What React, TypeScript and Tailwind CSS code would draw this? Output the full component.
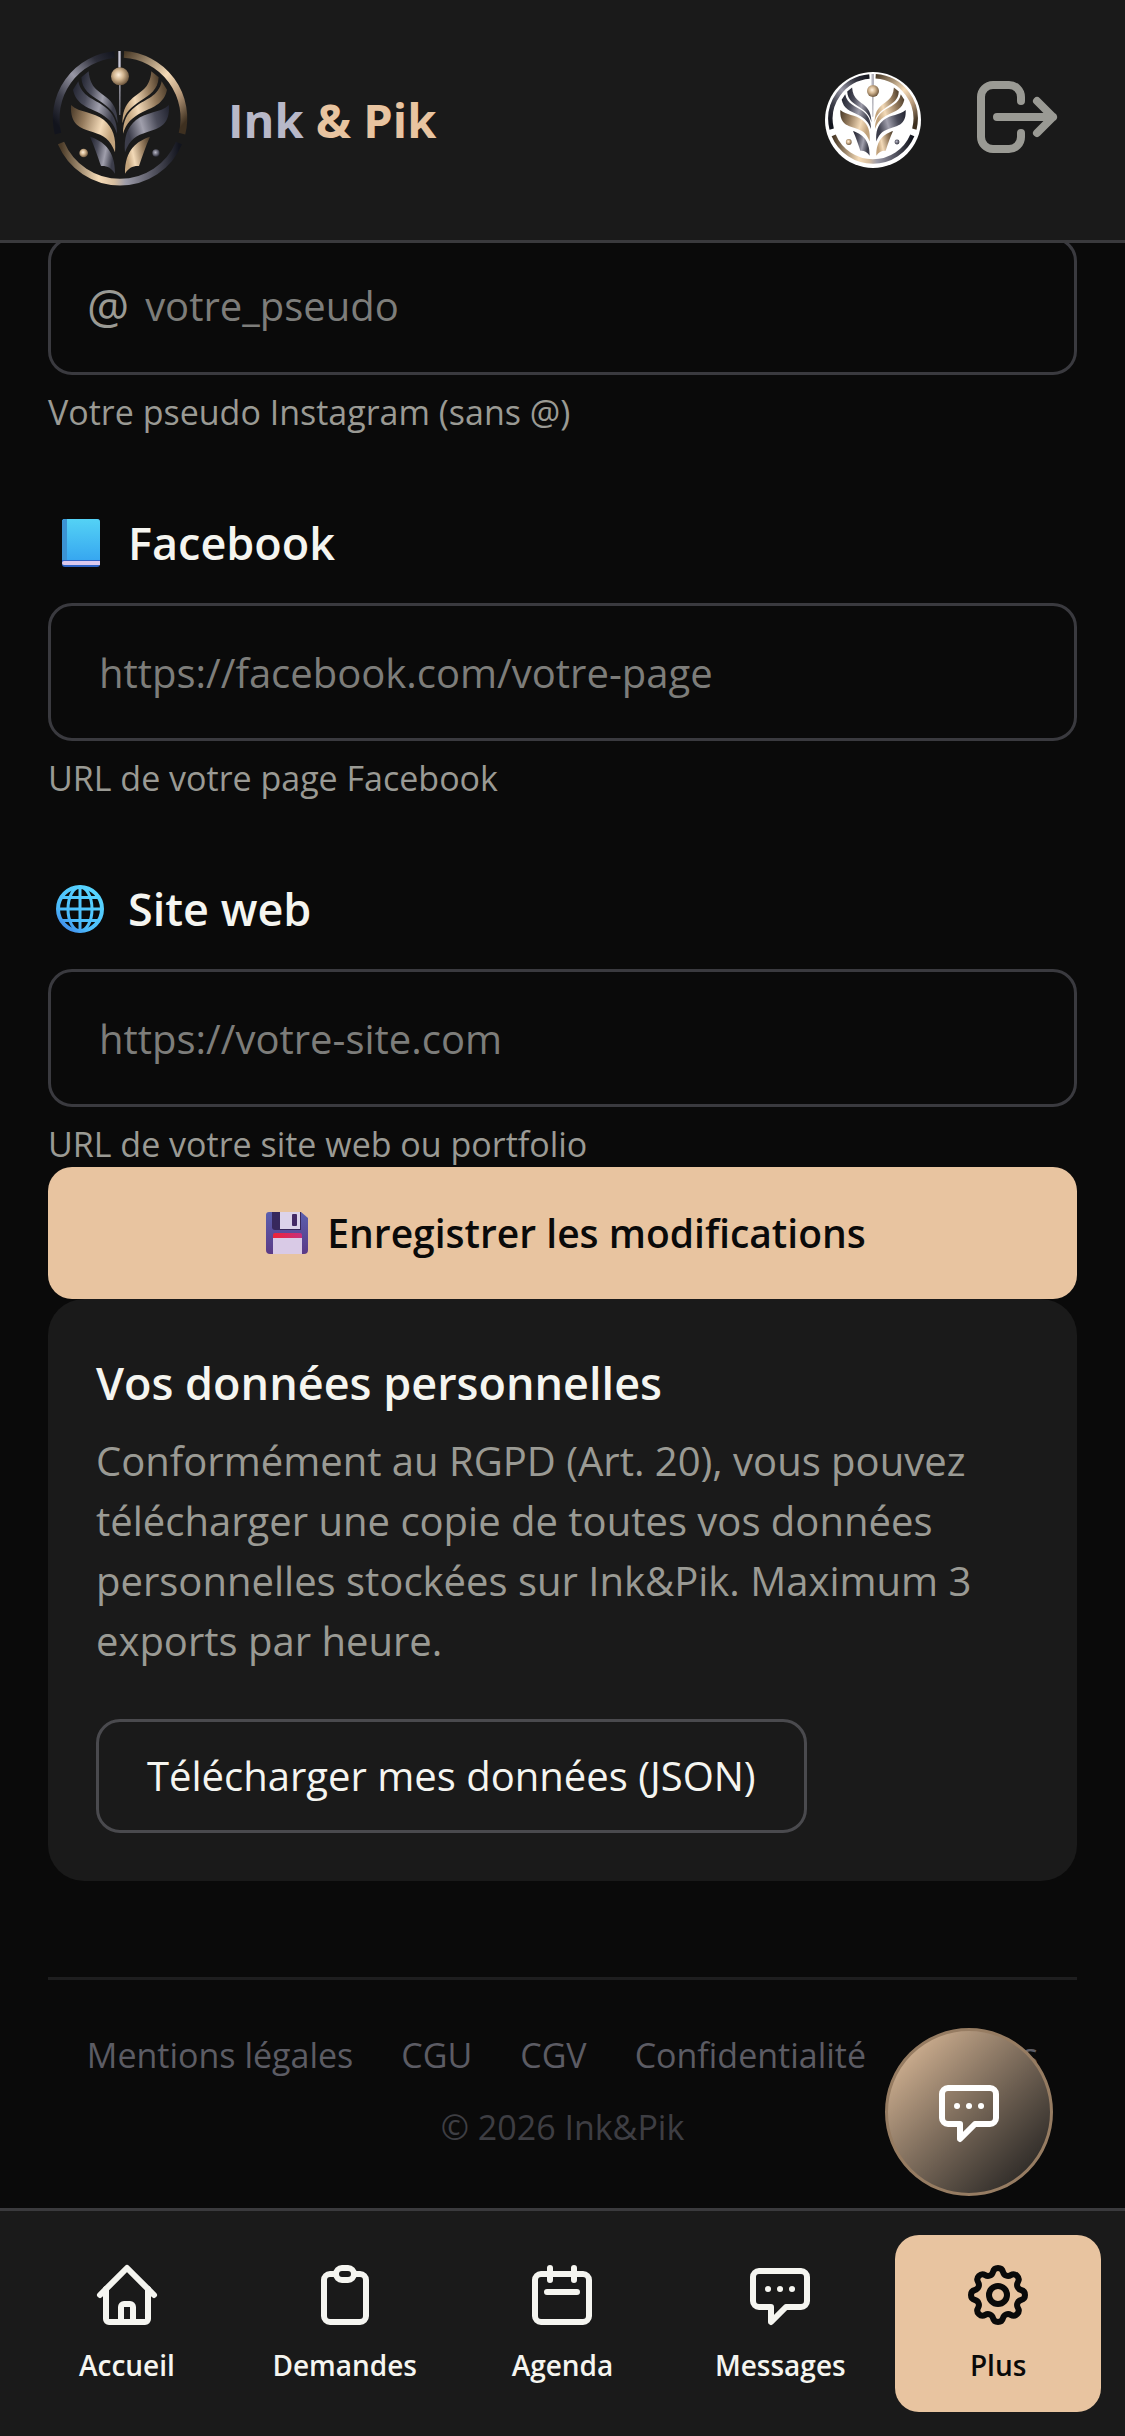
import type { ReactNode } from "react";

type IconProps = { className?: string };

function Icon({ className, children }: IconProps & { children: ReactNode }) {
  return (
    <svg
      viewBox="0 0 24 24"
      fill="none"
      stroke="currentColor"
      strokeWidth={2}
      strokeLinecap="round"
      strokeLinejoin="round"
      aria-hidden="true"
      className={className}
    >
      {children}
    </svg>
  );
}

const HomeIcon = (props: IconProps) => (
  <Icon {...props}>
    <path d="M3 12l9-9 9 9" />
    <path d="M5 10v10a1 1 0 0 0 1 1h12a1 1 0 0 0 1-1V10" />
    <path d="M10 21v-5a1 1 0 0 1 1-1h2a1 1 0 0 1 1 1v5" />
  </Icon>
);

const ClipboardIcon = (props: IconProps) => (
  <Icon {...props}>
    <path d="M15 5h2a2 2 0 0 1 2 2v12a2 2 0 0 1-2 2H7a2 2 0 0 1-2-2V7a2 2 0 0 1 2-2h2" />
    <rect x="9" y="3" width="6" height="4" rx="2" />
  </Icon>
);

const CalendarIcon = (props: IconProps) => (
  <Icon {...props}>
    <rect x="3" y="5" width="18" height="16" rx="2" />
    <path d="M8 3v4M16 3v4M7 11h10" />
  </Icon>
);

const ChatIcon = (props: IconProps) => (
  <Icon {...props}>
    <path d="M5 4h14a2 2 0 0 1 2 2v8a2 2 0 0 1-2 2h-5l-5 5v-5H5a2 2 0 0 1-2-2V6a2 2 0 0 1 2-2z" />
    <path d="M8 10h.01M12 10h.01M16 10h.01" />
  </Icon>
);

const CogIcon = (props: IconProps) => (
  <Icon {...props}>
    <path d="M10.325 4.317c.426-1.756 2.924-1.756 3.35 0a1.724 1.724 0 0 0 2.573 1.066c1.543-.94 3.31.826 2.37 2.37a1.724 1.724 0 0 0 1.065 2.572c1.756.426 1.756 2.924 0 3.35a1.724 1.724 0 0 0-1.066 2.573c.94 1.543-.826 3.31-2.37 2.37a1.724 1.724 0 0 0-2.572 1.065c-.426 1.756-2.924 1.756-3.35 0a1.724 1.724 0 0 0-2.573-1.066c-1.543.94-3.31-.826-2.37-2.37a1.724 1.724 0 0 0-1.065-2.572c-1.756-.426-1.756-2.924 0-3.35a1.724 1.724 0 0 0 1.066-2.573c-.94-1.543.826-3.31 2.37-2.37.996.608 2.296.07 2.572-1.065z" />
    <circle cx="12" cy="12" r="3" />
  </Icon>
);

const LogoutIcon = (props: IconProps) => (
  <Icon {...props}>
    <path d="M13 8V7a3 3 0 0 0-3-3H6a3 3 0 0 0-3 3v10a3 3 0 0 0 3 3h4a3 3 0 0 0 3-3v-1" />
    <path d="M7 12h14M17 8l4 4-4 4" />
  </Icon>
);

const BookEmoji = () => (
  <svg viewBox="0 0 64 64" className="h-16 w-16" aria-hidden="true">
    <defs>
      <linearGradient id="book-cover" x1="0" y1="0" x2="0" y2="1">
        <stop offset="0" stopColor="#54d2f5" />
        <stop offset="1" stopColor="#37a7f0" />
      </linearGradient>
    </defs>
    <rect x="14" y="8" width="38" height="48" rx="3" fill="#2f62c4" />
    <path d="M16 50h36v4H16a2 2 0 0 1 0-4z" fill="#dcc9ee" />
    <path d="M17 8h32a3 3 0 0 1 3 3v38H14V11a3 3 0 0 1 3-3z" fill="url(#book-cover)" />
    <path d="M17 8h2v41h-5V11a3 3 0 0 1 3-3z" fill="#3b93d3" />
  </svg>
);

const GlobeEmoji = () => (
  <svg viewBox="0 0 64 64" className="h-16 w-16" fill="none" stroke="url(#globe-line)" aria-hidden="true">
    <defs>
      <linearGradient id="globe-line" gradientUnits="userSpaceOnUse" x1="46" y1="12" x2="14" y2="52">
        <stop offset="0" stopColor="#58d6ff" />
        <stop offset="0.7" stopColor="#4cbcfb" />
        <stop offset="1" stopColor="#3f86ea" />
      </linearGradient>
    </defs>
    <circle cx="32" cy="32" r="22" strokeWidth="4" />
    <ellipse cx="32" cy="32" rx="12" ry="22" strokeWidth="3" />
    <path d="M32 10v44M14 20.500h36M10 32h44M14 43.500h36" strokeWidth="3" />
  </svg>
);

const FloppyEmoji = () => (
  <svg viewBox="0 0 56 56" className="h-14 w-14" aria-hidden="true">
    <defs>
      <linearGradient id="floppy-body" x1="0" y1="0" x2="0" y2="1">
        <stop offset="0" stopColor="#5a5fae" />
        <stop offset="1" stopColor="#5b3a86" />
      </linearGradient>
      <linearGradient id="floppy-label" x1="0" y1="0" x2="1" y2="0">
        <stop offset="0" stopColor="#ee2338" />
        <stop offset="1" stopColor="#c5307e" />
      </linearGradient>
    </defs>
    <path d="M10 7h32l7 6v32a4 4 0 0 1-4 4H11a4 4 0 0 1-4-4V10a3 3 0 0 1 3-3z" fill="url(#floppy-body)" />
    <path d="M13 7h29v18H16a3 3 0 0 1-3-3z" fill="#37285c" />
    <path d="M21 7h20v17H21z" fill="#dcd3ea" />
    <rect x="33" y="9" width="5" height="12" rx="1" fill="#442a66" />
    <path d="M14 30a2 2 0 0 1 2-2h25a2 2 0 0 1 2 2v4H14z" fill="url(#floppy-label)" />
    <path d="M14 33h29v16H14z" fill="#d9cae6" />
  </svg>
);

// Half of the emblem's leaves; the other half is the same shapes mirrored with the two metals swapped
function Leaves({ a, b }: { a: string; b: string }) {
  return (
    <>
      <path fill={a} d="M134 88C138 142 168 148 194 172C213 190 220 210 221 244C212 210 197 197 166 176C138 158 114 144 112 106Z" />
      <path fill={a} d="M103 118C112 164 150 170 182 194C208 213 219 238 219 275C209 243 192 226 160 210C124 193 96 184 87 143Z" />
      <path fill={b} d="M81 189C108 214 148 208 180 234C207 256 217 288 213 331C198 291 180 281 146 270C108 258 78 249 81 189Z" />
      <path fill={a} d="M138 284C176 297 214 322 213 395C202 378 190 371 171 372C160 340 152 316 138 284Z" />
    </>
  );
}

function Emblem({ id, className }: { id: string; className?: string }) {
  const silver = `url(#${id}-silver)`;
  const gold = `url(#${id}-gold)`;
  return (
    <svg viewBox="12 18 432 432" className={className} role="img" aria-label="Ink & Pik">
      <defs>
        <linearGradient id={`${id}-silver`} x1="0" y1="0" x2="1" y2="0.3">
          <stop offset="0" stopColor="#20222e" />
          <stop offset="0.35" stopColor="#4b4c5a" />
          <stop offset="0.68" stopColor="#a09fac" />
          <stop offset="1" stopColor="#3c3d4a" />
        </linearGradient>
        <linearGradient id={`${id}-gold`} x1="0" y1="0" x2="1" y2="0.3">
          <stop offset="0" stopColor="#463726" />
          <stop offset="0.35" stopColor="#957b5d" />
          <stop offset="0.75" stopColor="#f3dab8" />
          <stop offset="1" stopColor="#c2a37c" />
        </linearGradient>
        <linearGradient id={`${id}-ring-left`} x1="1" y1="0" x2="0.15" y2="1">
          <stop offset="0" stopColor="#14161f" />
          <stop offset="0.2" stopColor="#2c2d38" />
          <stop offset="0.5" stopColor="#9897a5" />
          <stop offset="0.75" stopColor="#3f404c" />
          <stop offset="1" stopColor="#12141d" />
        </linearGradient>
        <linearGradient id={`${id}-ring-right`} x1="0" y1="0" x2="0.85" y2="1">
          <stop offset="0" stopColor="#4b3b28" />
          <stop offset="0.5" stopColor="#f6dcb8" />
          <stop offset="0.75" stopColor="#b7997a" />
          <stop offset="1" stopColor="#3e3020" />
        </linearGradient>
        <linearGradient id={`${id}-ring-bottom`} x1="0" y1="0" x2="1" y2="0">
          <stop offset="0" stopColor="#4b3b28" />
          <stop offset="0.32" stopColor="#f6dcb8" />
          <stop offset="0.45" stopColor="#d6bd9f" />
          <stop offset="0.55" stopColor="#9c9ba8" />
          <stop offset="0.75" stopColor="#5d5d6a" />
          <stop offset="1" stopColor="#12141d" />
        </linearGradient>
        <radialGradient id={`${id}-bead`} cx="0.42" cy="0.42" r="0.6">
          <stop offset="0" stopColor="#fff0dc" />
          <stop offset="0.45" stopColor="#d3b691" />
          <stop offset="1" stopColor="#6b543b" />
        </radialGradient>
        <radialGradient id={`${id}-pearl`} cx="0.42" cy="0.42" r="0.6">
          <stop offset="0" stopColor="#b9b8c8" />
          <stop offset="1" stopColor="#2a2b37" />
        </radialGradient>
      </defs>
      <g fill="none" strokeWidth="20">
        <path d="M212 38A192 192 0 0 0 42 275" stroke={`url(#${id}-ring-left)`} />
        <path d="M240 37A192 192 0 0 1 414 275" stroke={`url(#${id}-ring-right)`} />
        <path d="M51 303A192 192 0 0 0 405 303" stroke={`url(#${id}-ring-bottom)`} />
      </g>
      <path d="M222 27h9v50h-9z" fill="#8d8c99" />
      <path d="M225 27h3v50h-3z" fill="#c9c8d4" />
      <path d="M225 129h5l-1 90h-3z" fill="#8f8e99" />
      <circle cx="228" cy="103" r="27" fill={`url(#${id}-bead)`} />
      <Leaves a={silver} b={gold} />
      <g transform="translate(456 0) scale(-1 1)">
        <Leaves a={gold} b={silver} />
      </g>
      <circle cx="119" cy="333" r="13" fill={`url(#${id}-bead)`} />
      <circle cx="336" cy="333" r="11" fill={`url(#${id}-pearl)`} />
    </svg>
  );
}

const fields = [
  {
    id: "facebook",
    label: "Facebook",
    icon: <BookEmoji />,
    placeholder: "https://facebook.com/votre-page",
    hint: "URL de votre page Facebook",
  },
  {
    id: "website",
    label: "Site web",
    icon: <GlobeEmoji />,
    placeholder: "https://votre-site.com",
    hint: "URL de votre site web ou portfolio",
  },
];

const legalLinks = ["Mentions légales", "CGU", "CGV", "Confidentialité", "Cookies"];

const tabs = [
  { label: "Accueil", icon: HomeIcon, active: false },
  { label: "Demandes", icon: ClipboardIcon, active: false },
  { label: "Agenda", icon: CalendarIcon, active: false },
  { label: "Messages", icon: ChatIcon, active: false },
  { label: "Plus", icon: CogIcon, active: true },
];

function Header() {
  return (
    <header className="sticky top-0 z-20 flex items-center justify-between border-b-3 border-[#3a3a3d] bg-[#1a1a1a] px-12 py-12">
      <a href="#" className="flex items-center gap-9">
        <Emblem id="brand" className="h-36 w-36" />
        <span className="text-[47px] font-bold leading-[72px] text-[#e8c4a0]">
          <span className="text-[#b8b8c8]">Ink</span> &amp; Pik
        </span>
      </a>
      <div className="flex items-center gap-9">
        <a href="#" className="rounded-full bg-white">
          <Emblem id="avatar" className="h-24 w-24" />
        </a>
        <button type="button" aria-label="Se déconnecter" className="px-3 pb-1.5 text-[#9a9a94]">
          <LogoutIcon className="h-24 w-24" />
        </button>
      </div>
    </header>
  );
}

function ProfileForm() {
  return (
    <form className="flex flex-col">
      <div className="flex flex-col gap-[72px]">
        <div>
          <div className="flex h-[138px] items-center gap-4 rounded-3xl border-3 border-[#3a3a3f] pl-9 pr-12">
            <span className="text-[47px] leading-[60px] text-[#9a9a94]">@</span>
            <input
              id="instagram"
              aria-label="Instagram"
              type="text"
              placeholder="votre_pseudo"
              className="min-w-0 flex-1 bg-transparent text-[40px] leading-[60px] text-[#f5f5f0] outline-none placeholder:text-[#7d7d7a]"
            />
          </div>
          <p className="mt-3.5 text-[34px] leading-[46px] text-[#9a9a94]">Votre pseudo Instagram (sans @)</p>
        </div>
        {fields.map((field) => (
          <div key={field.id}>
            <label
              htmlFor={field.id}
              className="flex h-18 items-center gap-4 text-[45px] font-semibold leading-[72px] text-[#f5f5f0]"
            >
              {field.icon}
              {field.label}
            </label>
            <input
              id={field.id}
              type="url"
              placeholder={field.placeholder}
              className="mt-6 block h-[138px] w-full rounded-3xl border-3 border-[#3a3a3f] bg-transparent px-12 text-[40px] leading-[60px] text-[#f5f5f0] outline-none placeholder:text-[#7d7d7a]"
            />
            <p className="mt-3.5 text-[34px] leading-[46px] text-[#9a9a94]">{field.hint}</p>
          </div>
        ))}
      </div>
      <button
        type="submit"
        className="flex h-[132px] items-center justify-center gap-3 rounded-3xl bg-[#e8c4a0] text-[39px] font-semibold text-[#0a0a0a]"
      >
        <FloppyEmoji />
        Enregistrer les modifications
      </button>
    </form>
  );
}

function PersonalData() {
  return (
    <section className="rounded-[36px] bg-[#1a1a1a] p-12">
      <h2 className="text-[45px] font-semibold leading-[72px] text-[#f5f5f0]">Vos données personnelles</h2>
      <p className="mt-3 text-[40px] leading-[60px] text-[#9a9a94]">
        Conformément au RGPD (Art. 20), vous pouvez télécharger une copie de toutes vos données personnelles
        stockées sur Ink&amp;Pik. Maximum 3 exports par heure.
      </p>
      <button
        type="button"
        className="mt-12 h-[114px] rounded-3xl border-3 border-[#4a4a4e] px-12 text-[40px] leading-[60px] text-[#f5f5f0]"
      >
        Télécharger mes données (JSON)
      </button>
    </section>
  );
}

function Footer() {
  return (
    <footer className="mt-24 border-t-3 border-[#1e1e1f] pt-12 text-[34px] leading-[54px]">
      <nav className="flex justify-center gap-12 text-[#5c5c64]">
        {legalLinks.map((link) => (
          <a key={link} href="#" className="whitespace-nowrap">
            {link}
          </a>
        ))}
      </nav>
      <p className="mt-[18px] pb-[54px] text-center text-[#3e3e43]">© 2026 Ink&amp;Pik</p>
    </footer>
  );
}

function TabBar() {
  return (
    <nav className="sticky bottom-0 z-20 grid grid-cols-5 gap-3 border-t-3 border-[#3a3a3d] bg-[#1a1a1a] p-6">
      {tabs.map(({ label, icon: TabIcon, active }) => (
        <a
          key={label}
          href="#"
          aria-current={active ? "page" : undefined}
          className={`flex flex-col items-center gap-3 rounded-3xl py-6 ${
            active ? "bg-[#e8c4a0] text-[#0a0a0a]" : "text-[#f5f5f0]"
          }`}
        >
          <TabIcon className="h-18 w-18" />
          <span className="text-[28px] font-semibold leading-[45px]">{label}</span>
        </a>
      ))}
    </nav>
  );
}

export default function App() {
  return (
    <div className="flex min-h-screen flex-col bg-[#0a0a0a] font-['Open_Sans','Noto_Sans',sans-serif]">
      <Header />
      {/* the form scrolls up under the header */}
      <main className="-mt-1.5 flex-1 px-12">
        <ProfileForm />
        <PersonalData />
        <Footer />
      </main>
      <button
        type="button"
        aria-label="Ouvrir la messagerie"
        className="fixed bottom-60 right-[72px] z-10 flex h-42 w-42 items-center justify-center rounded-full border-3 border-[#967c62] bg-linear-135 from-[#e8c4a0] to-[#1a1a1a] text-white"
      >
        <ChatIcon className="h-18 w-18" />
      </button>
      <TabBar />
    </div>
  );
}
